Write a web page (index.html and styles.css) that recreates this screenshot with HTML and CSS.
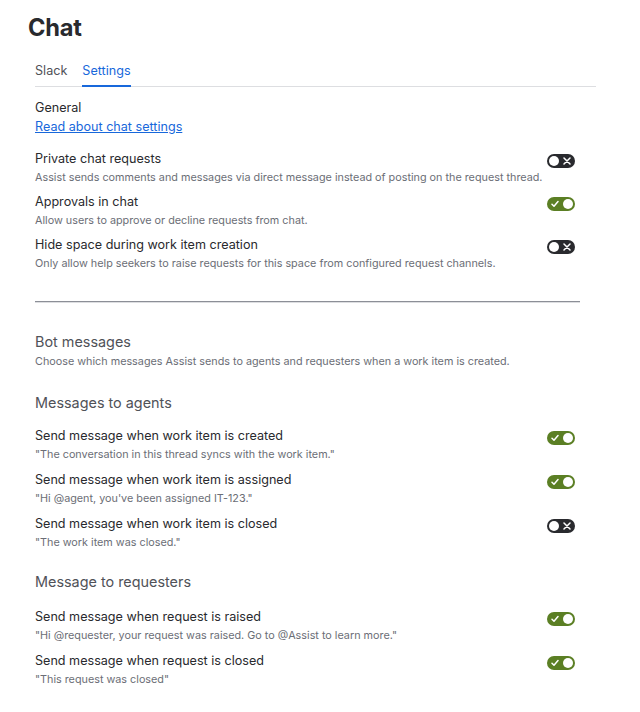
FILE: index.html
```html
<!DOCTYPE html>
<html lang="en">
<head>
<meta charset="utf-8">
<title>Chat</title>
<link rel="stylesheet" href="styles.css">
</head>
<body>
<div class="page">
  <h1 class="title">Chat</h1>
  <div class="tabs">
    <div class="tab">Slack</div>
    <div class="tab tab-active">Settings</div>
  </div>
  <div class="content">
    <div class="general">
      <div class="general-label">General</div>
      <a class="link" href="#">Read about chat settings</a>
    </div>

    <div class="rows first-rows">
      <div class="row">
        <div class="row-text">
          <div class="row-title">Private chat requests</div>
          <div class="row-desc">Assist sends comments and messages via direct message instead of posting on the request thread.</div>
        </div>
        <span class="toggle off"><svg class="icon-x" viewBox="0 0 8 8"><path d="M1 1 L7 7 M7 1 L1 7"/></svg><span class="knob"></span></span>
      </div>
      <div class="row">
        <div class="row-text">
          <div class="row-title">Approvals in chat</div>
          <div class="row-desc">Allow users to approve or decline requests from chat.</div>
        </div>
        <span class="toggle on"><svg class="icon-check" viewBox="0 0 8 8"><path d="M1 4.2 L3 6.2 L7 1.6"/></svg><span class="knob"></span></span>
      </div>
      <div class="row">
        <div class="row-text">
          <div class="row-title">Hide space during work item creation</div>
          <div class="row-desc">Only allow help seekers to raise requests for this space from configured request channels.</div>
        </div>
        <span class="toggle off"><svg class="icon-x" viewBox="0 0 8 8"><path d="M1 1 L7 7 M7 1 L1 7"/></svg><span class="knob"></span></span>
      </div>
    </div>

    <hr class="divider">

    <div class="section-head">
      <h2 class="section-title">Bot messages</h2>
      <div class="section-desc">Choose which messages Assist sends to agents and requesters when a work item is created.</div>
    </div>

    <h3 class="group-title">Messages to agents</h3>
    <div class="rows bot-rows">
      <div class="row">
        <div class="row-text">
          <div class="row-title">Send message when work item is created</div>
          <div class="row-desc">"The conversation in this thread syncs with the work item."</div>
        </div>
        <span class="toggle on"><svg class="icon-check" viewBox="0 0 8 8"><path d="M1 4.2 L3 6.2 L7 1.6"/></svg><span class="knob"></span></span>
      </div>
      <div class="row">
        <div class="row-text">
          <div class="row-title">Send message when work item is assigned</div>
          <div class="row-desc">"Hi @agent, you've been assigned IT-123."</div>
        </div>
        <span class="toggle on"><svg class="icon-check" viewBox="0 0 8 8"><path d="M1 4.2 L3 6.2 L7 1.6"/></svg><span class="knob"></span></span>
      </div>
      <div class="row">
        <div class="row-text">
          <div class="row-title">Send message when work item is closed</div>
          <div class="row-desc">"The work item was closed."</div>
        </div>
        <span class="toggle off"><svg class="icon-x" viewBox="0 0 8 8"><path d="M1 1 L7 7 M7 1 L1 7"/></svg><span class="knob"></span></span>
      </div>
    </div>

    <h3 class="group-title group-second">Message to requesters</h3>
    <div class="rows bot-rows">
      <div class="row">
        <div class="row-text">
          <div class="row-title">Send message when request is raised</div>
          <div class="row-desc">"Hi @requester, your request was raised. Go to @Assist to learn more."</div>
        </div>
        <span class="toggle on"><svg class="icon-check" viewBox="0 0 8 8"><path d="M1 4.2 L3 6.2 L7 1.6"/></svg><span class="knob"></span></span>
      </div>
      <div class="row">
        <div class="row-text">
          <div class="row-title">Send message when request is closed</div>
          <div class="row-desc">"This request was closed"</div>
        </div>
        <span class="toggle on"><svg class="icon-check" viewBox="0 0 8 8"><path d="M1 4.2 L3 6.2 L7 1.6"/></svg><span class="knob"></span></span>
      </div>
    </div>
  </div>
</div>
</body>
</html>
```

FILE: styles.css
```css
* { box-sizing: border-box; }
html, body { margin: 0; padding: 0; background: #ffffff; }
body {
  font-family: Inter, "Noto Sans", "Liberation Sans", sans-serif;
  color: #292a2e;
}
.page {
  padding: 14px 44px 0 28px;
}
.title {
  margin: 0;
  font-size: 23.6px;
  line-height: 28px;
  font-weight: 700;
  color: #292a2e;
  letter-spacing: -0.2px;
}
.tabs {
  margin: 19px 0 0 7px;
  display: flex;
  gap: 15px;
  border-bottom: 1px solid #dddee1;
}
.tab {
  font-size: 12.6px;
  line-height: 20px;
  padding-bottom: 4px;
  color: #505258;
  margin-bottom: -1px;
  border-bottom: 2px solid transparent;
}
.tab-active {
  color: #1868db;
  border-bottom-color: #1868db;
}
.content {
  margin: 0 16px 0 7px;
}
.general {
  margin-top: 11px;
  display: flex;
  flex-direction: column;
  align-items: flex-start;
}
.general-label {
  font-size: 12.6px;
  line-height: 20px;
}
.link {
  font-size: 12.6px;
  line-height: 18px;
  color: #1868db;
  text-decoration: underline;
}
.rows {
  display: flex;
  flex-direction: column;
  gap: 5px;
}
.bot-rows {
  gap: 6px;
}
.first-rows {
  margin-top: 13px;
}
.row {
  display: flex;
  justify-content: space-between;
  align-items: flex-start;
}
.row-title {
  font-size: 12.6px;
  line-height: 20px;
  color: #292a2e;
}
.row-desc {
  font-size: 10.8px;
  line-height: 18px;
  color: #6b6e76;
}
.toggle {
  flex: none;
  margin-top: 5px;
  margin-right: 5px;
  width: 28px;
  height: 14px;
  border-radius: 7px;
  display: flex;
  align-items: center;
  padding: 0 2px;
}
.toggle.off {
  background: #292a2e;
  flex-direction: row-reverse;
  justify-content: space-between;
}
.toggle.on {
  background: #5b7f24;
  justify-content: space-between;
}
.knob {
  width: 10px;
  height: 10px;
  border-radius: 50%;
  background: #ffffff;
}
.toggle svg {
  width: 8px;
  height: 8px;
  fill: none;
  stroke: #ffffff;
  stroke-width: 1.5;
  stroke-linecap: round;
  stroke-linejoin: round;
}
.toggle .icon-x { margin-right: 2px; }
.toggle .icon-check { margin-left: 2px; }
.divider {
  margin: 28px 0 0 0;
  border: 0;
  border-top: 1px solid #8c8f97;
  border-bottom: 1px solid #dddee1;
  height: 0;
}
.section-head {
  margin-top: 27px;
}
.section-title {
  margin: 0;
  font-size: 14.4px;
  line-height: 24px;
  font-weight: 400;
  color: #505258;
}
.section-desc {
  font-size: 10.8px;
  line-height: 16px;
  color: #6b6e76;
}
.group-title {
  margin: 21px 0 11px 0;
  font-size: 14.4px;
  line-height: 24px;
  font-weight: 400;
  color: #505258;
}
.group-second {
  margin-top: 18px;
  margin-bottom: 13px;
}
```
